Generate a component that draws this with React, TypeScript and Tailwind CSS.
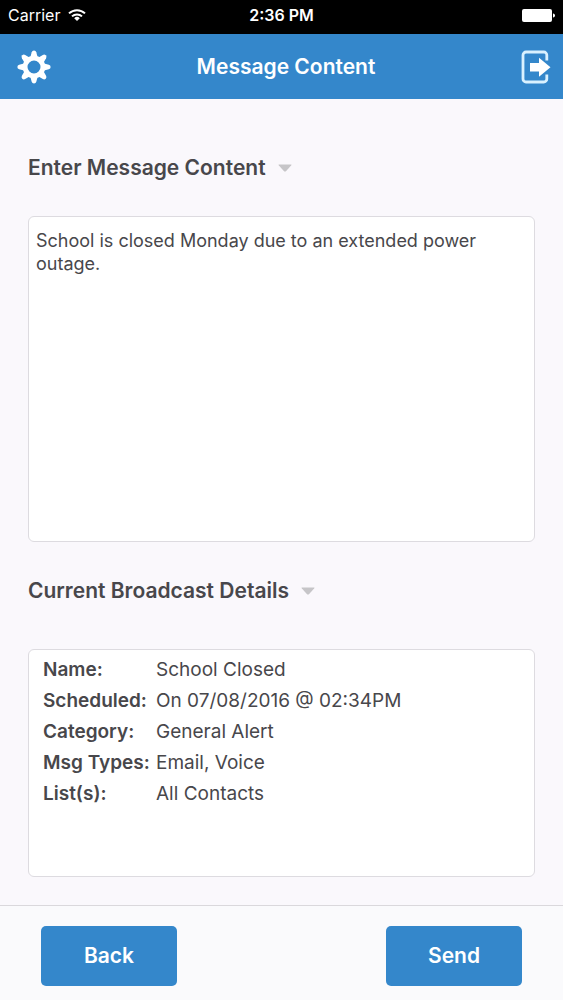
import { useState } from 'react';

const details = [
  { label: 'Name:', value: 'School Closed' },
  { label: 'Scheduled:', value: 'On 07/08/2016 @ 02:34PM' },
  { label: 'Category:', value: 'General Alert' },
  { label: 'Msg Types:', value: 'Email, Voice' },
  { label: 'List(s):', value: 'All Contacts' },
];

const gearTeeth = [0, 45, 90, 135, 180, 225, 270, 315];

function WifiIcon() {
  return (
    <svg className="h-3 w-[18px]" viewBox="0 0 18 12" fill="none" stroke="#fff" strokeWidth="2" aria-hidden="true">
      <path d="M1 4.4a11.5 11.5 0 0 1 16 0" />
      <path d="M4 7.4a7.2 7.2 0 0 1 10 0" />
      <path d="M9 12 6.2 9.2a4 4 0 0 1 5.6 0z" fill="#fff" stroke="none" />
    </svg>
  );
}

function BatteryIcon() {
  return (
    <svg className="h-[13px] w-[33px]" viewBox="0 0 33 13" fill="#fff" aria-hidden="true">
      <rect width="30" height="13" rx="2" />
      <path d="M31 4.5c1.4.3 2 1.1 2 2s-.6 1.7-2 2z" />
    </svg>
  );
}

function GearIcon() {
  return (
    <svg className="h-[34px] w-[34px]" viewBox="-17 -17 34 34" fill="#fff" aria-hidden="true">
      <circle r="8.9" fill="none" stroke="#fff" strokeWidth="4.8" />
      {gearTeeth.map((angle) => (
        <path
          key={angle}
          d="M-3.6-10-2.3-14.8q.5-1.8 2.3-1.8t2.3 1.8L3.600-10z"
          transform={`rotate(${angle})`}
        />
      ))}
    </svg>
  );
}

function ExitIcon() {
  return (
    <svg className="h-[34px] w-[30px]" viewBox="0 0 30 34" fill="none" aria-hidden="true">
      <path
        d="M25.800 10.500V5a3 3 0 0 0-3-3H5a3 3 0 0 0-3 3v24a3 3 0 0 0 3 3h17.800a3 3 0 0 0 3-3v-4.500"
        stroke="#d9f1ff"
        strokeWidth="2.800"
      />
      <path d="M9 13h9V7.800l11.500 9.400L18 26.800v-5.300H9z" fill="#fff" />
    </svg>
  );
}

function Caret() {
  return (
    <svg className="h-2 w-[14px]" viewBox="0 0 14 8" fill="#c6c5c8" aria-hidden="true">
      <path d="M1 .5h12q1 0 .3.8L8.200 7q-1.200 1-2.400 0L.7 1.300Q0 .5 1 .5z" />
    </svg>
  );
}

export default function App() {
  const [message, setMessage] = useState('School is closed Monday due to an extended power outage.');

  return (
    <div className="flex min-h-screen flex-col bg-[#faf8fc] font-['Inter',sans-serif] text-[#48474b]">
      {/* Status bar */}
      <div className="grid h-[34px] grid-cols-3 items-center bg-black px-2 pb-1 text-base text-white">
        <div className="flex items-center gap-2">
          <span>Carrier</span>
          <WifiIcon />
        </div>
        <span className="text-center font-semibold">2:36 PM</span>
        <span className="justify-self-end">
          <BatteryIcon />
        </span>
      </div>

      {/* Nav bar */}
      <header className="flex h-[65px] items-center justify-between bg-[#3487cb] pr-3 pl-[17px] text-white">
        <button type="button" aria-label="Settings">
          <GearIcon />
        </button>
        <h1 className="text-[21px] leading-8 font-semibold">Message Content</h1>
        <button type="button" aria-label="Log out">
          <ExitIcon />
        </button>
      </header>

      <main className="flex flex-1 flex-col px-7 pt-[53px] pb-7">
        <h2 className="text-[21px] leading-8 font-semibold">
          <button type="button" className="flex items-center gap-3">
            <label htmlFor="message">Enter Message Content</label>
            <Caret />
          </button>
        </h2>
        <textarea
          id="message"
          rows={13}
          value={message}
          onChange={(e) => setMessage(e.target.value)}
          className="mt-8 block w-full resize-none rounded-md border border-[#dddbe0] bg-white px-[7px] pt-3 pb-[13px] text-[18px] leading-[23px] outline-none"
        />

        <h2 className="mt-[33px] text-[21px] leading-8 font-semibold">
          <button type="button" className="flex items-center gap-3">
            Current Broadcast Details
            <Caret />
          </button>
        </h2>
        <section className="mt-[42px] flex-1 rounded-md border border-[#dddbe0] bg-white px-3.5 pt-1 text-[19px] leading-[31px]">
          <table>
            <tbody>
              {details.map((row) => (
                <tr key={row.label}>
                  <th scope="row" className="w-[113px] p-0 text-left font-semibold">{row.label}</th>
                  <td className="p-0">{row.value}</td>
                </tr>
              ))}
            </tbody>
          </table>
        </section>
      </main>

      <footer className="flex justify-between border-t border-[#dad8dc] bg-[#fafafc] px-[41px] pt-5 pb-3.5 text-[21px] font-semibold text-white">
        <button type="button" className="h-[60px] w-[136px] rounded-[5px] bg-[#3487cb]">Back</button>
        <button type="button" className="h-[60px] w-[136px] rounded-[5px] bg-[#3487cb]">Send</button>
      </footer>
    </div>
  );
}
